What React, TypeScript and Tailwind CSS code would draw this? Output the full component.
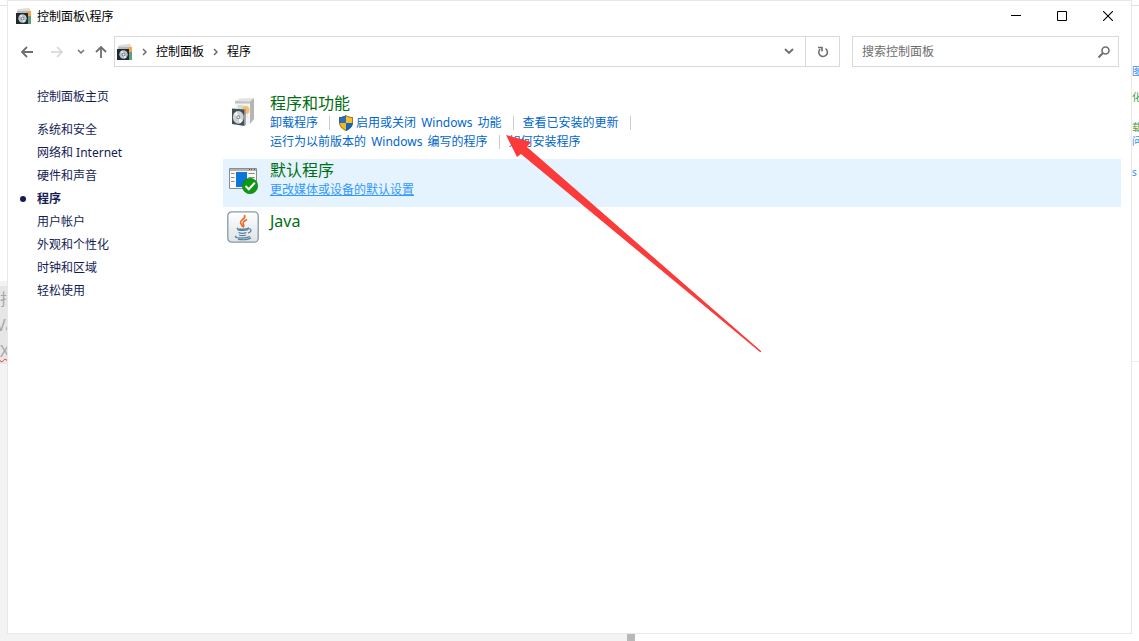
import type { ReactNode } from "react";

type NavItem = {
  label: string;
  active?: boolean;
};

const navItems: NavItem[] = [
  { label: "系统和安全" },
  { label: "网络和 Internet" },
  { label: "硬件和声音" },
  { label: "程序", active: true },
  { label: "用户帐户" },
  { label: "外观和个性化" },
  { label: "时钟和区域" },
  { label: "轻松使用" },
];

function PanelIcon() {
  return (
    <svg width="16" height="16" viewBox="0 0 16 16" className="shrink-0" aria-hidden="true">
      <path d="M2 1 13 0l2 3H1z" fill="#dcdcdc" />
      <path d="M1 3h14v13H1z" fill="#b9bdb9" />
      <path d="M10 3h5v6l-4-2z" fill="#f0a850" />
      <path d="M12 8h3v8h-3z" fill="#5f9f80" />
      <path d="M0 5h12v11H0z" fill="#23282c" />
      <circle cx="6.5" cy="10.5" r="4.2" fill="#b9c4ca" />
      <path d="m6.500 10.500-3-3 2-1zm0 0 3 3-2 1z" fill="#e8eef0" />
      <circle cx="6.5" cy="10.5" r="1.8" fill="#6d7479" />
      <circle cx="6.5" cy="10.5" r="1" fill="#fff" />
    </svg>
  );
}

function ProgramsIcon() {
  return (
    <svg width="32" height="32" viewBox="0 0 32 32" aria-hidden="true">
      <path d="m8 5 5-2.500 14-.5-4 3.500z" fill="#e3e3e3" />
      <path d="m8 5 15 .5V28l-5 1-10-2z" fill="#f4f4f4" />
      <path d="M23 5.500 27 2v21l-4 5z" fill="#b5b5b5" />
      <path d="m8 5 15 .5v2L8 7.500z" fill="#c2c2c2" />
      <path d="M10 9h11v13H10z" fill="#e8eeea" />
      <path d="M11 9h5l-2 5h-3z" fill="#c6e2d3" />
      <circle cx="18.5" cy="14" r="4" fill="#f9bd72" />
      <path d="m5 12.500 12.500 1V30L5 28z" fill="#454e54" />
      <path d="m17.500 13.500 1.200-1V29l-1.200 1z" fill="#8b9398" />
      <ellipse cx="11.3" cy="21.3" rx="5.4" ry="6.4" fill="#cbd4d9" />
      <path d="m11.300 21.300-4.500-3.300 3-2.800zm0 0 4.500 3.300-3 2.800z" fill="#fafafa" />
      <ellipse cx="11.3" cy="21.3" rx="1.8" ry="2" fill="#7c878e" />
      <circle cx="11.3" cy="21.3" r="1" fill="#fff" />
    </svg>
  );
}

function DefaultsIcon() {
  return (
    <svg width="32" height="32" viewBox="0 0 32 32" aria-hidden="true">
      <path d="M2.5 5.5h27v20h-27z" fill="#f8f8f8" stroke="#8c8c8c" />
      <path d="M3 6h26v2H3z" fill="#b3b3b3" />
      <path d="M22 6h1v1h-1zm2 0h1v1h-1zm3 0h1v1h-1z" fill="#555" />
      <path d="M4 10.500h3.500m-3.500 4h3.500m-3.500 4h3.500m14-8h6m-6 4h6m-6 4h6" stroke="#8a8a8a" />
      <path d="M9 9h11v15H9z" fill="#0f74d8" />
      <circle cx="23" cy="23" r="7.7" fill="#0b9a12" stroke="#087c0d" strokeWidth=".6" />
      <path d="m18.5 23 3.3 3.3 6-6.5" fill="none" stroke="#fff" strokeWidth="2" />
    </svg>
  );
}

function JavaIcon() {
  return (
    <svg width="32" height="32" viewBox="0 0 32 32" fill="none" aria-hidden="true">
      <defs>
        <linearGradient id="java-tile" x1="0" y1="0" x2="0" y2="1">
          <stop stopColor="#fff" />
          <stop offset="1" stopColor="#dde3e7" />
        </linearGradient>
      </defs>
      <rect x=".8" y=".8" width="30.4" height="30.4" rx="4" fill="url(#java-tile)" stroke="#8799a5" strokeWidth="1.3" />
      <path
        d="M17.500 4c2 4-5 5-4 8 .4 1.300 2 2 2 4M20 8.500c-3 1.500-5 3-3.500 5 .8 1.200.5 2-.5 3"
        stroke="#ec6a25"
        strokeWidth="1.6"
      />
      <path
        d="M11 17c-4 1.200 8 2 11-.2M10.500 18.500c1 1.200 8 1.200 10.500.2M11.500 21.500c2 .9 6 .8 8 0M12 24c2 .8 5 .8 7 0M9.500 25c-5 1.800 8 3.200 13.500.5M21 18c4-1 4 3 0 4M11 28.300c5 .7 11 .2 13-1.500"
        stroke="#56819f"
        strokeWidth="1.2"
      />
    </svg>
  );
}

function ShieldIcon() {
  return (
    <svg width="14" height="16" viewBox="0 0 14 16" className="mr-[3px] shrink-0" aria-hidden="true">
      <path d="M7 0C5 1.5 3 2 0 2v6h7z" fill="#2b6fb8" />
      <path d="M7 0c2 1.5 4 2 7 2v6H7z" fill="#fbbf24" />
      <path d="M0 8c.5 4 3.5 6.5 7 8V8z" fill="#f5b81f" />
      <path d="M14 8c-.5 4-3.5 6.5-7 8V8z" fill="#1467bb" />
      <path
        d="M7 .6c2 1.400 4 1.900 6.500 1.900V7c0 4-2.500 6.500-6.500 8.400C3 13.500.5 11 .5 7V2.500C3 2.500 5 2 7 .6z"
        fill="none"
        stroke="#4c5158"
        strokeOpacity=".65"
      />
    </svg>
  );
}

function TaskLink({ icon, children }: { icon?: ReactNode; children: ReactNode }) {
  return (
    <a href="#" className="flex items-center whitespace-nowrap text-[#0066cc] hover:underline">
      {icon}
      <span>{children}</span>
    </a>
  );
}

function Divider() {
  return <span className="mr-[9px] ml-[11px] h-[14px] w-px bg-[#cccccc]" />;
}

function Category({
  icon,
  title,
  highlighted,
  children,
}: {
  icon: ReactNode;
  title: string;
  highlighted?: boolean;
  children?: ReactNode;
}) {
  return (
    <section className={highlighted ? "flex gap-[11px] bg-[#e5f3ff] pl-1" : "flex gap-[11px] pl-1"}>
      <div className="shrink-0 pt-1">{icon}</div>
      <div className={children ? "pt-px pb-2" : "pt-1 pb-6"}>
        <h2 className="text-[16px] leading-5 text-[#006e12]">
          <a href="#">{title}</a>
        </h2>
        {children}
      </div>
    </section>
  );
}

function TitleBar() {
  return (
    <header className="flex h-[30px] items-center justify-between">
      <div className="flex items-center gap-[5px] pl-2 text-black">
        <PanelIcon />
        <h1>控制面板\程序</h1>
      </div>
      <div className="flex h-full text-black">
        <button type="button" aria-label="最小化" className="flex w-[46px] items-center justify-center">
          <svg width="10" height="10" viewBox="0 0 10 10" stroke="currentColor">
            <path d="M0 4.5h10" />
          </svg>
        </button>
        <button type="button" aria-label="最大化" className="flex w-[46px] items-center justify-center">
          <svg width="10" height="10" viewBox="0 0 10 10" fill="none" stroke="currentColor">
            <path d="M.5.5h9v9h-9z" />
          </svg>
        </button>
        <button type="button" aria-label="关闭" className="flex w-[46px] items-center justify-center">
          <svg width="10" height="10" viewBox="0 0 10 10" stroke="currentColor" strokeWidth="1.1">
            <path d="m0 0 10 10M10 0 0 10" />
          </svg>
        </button>
      </div>
    </header>
  );
}

function Crumb() {
  return (
    <svg width="5" height="8" viewBox="0 0 5 8" fill="none" stroke="#6b6b6b" strokeWidth="1.5" aria-hidden="true">
      <path d="m1 1 3 3-3 3" />
    </svg>
  );
}

function Toolbar() {
  return (
    <div className="mt-[5px] flex h-[31px] pr-3 pl-[13px]">
      <nav className="flex w-[93px] shrink-0 items-center text-[#6f6f6f]">
        <button type="button" aria-label="后退">
          <svg width="14" height="12" viewBox="0 0 14 12" fill="none" stroke="currentColor" strokeWidth="1.8">
            <path d="M12 6H1m5-5L1 6l5 5" />
          </svg>
        </button>
        <button type="button" aria-label="前进" className="ml-4 text-[#d4d4d4]">
          <svg width="14" height="12" viewBox="0 0 14 12" fill="none" stroke="currentColor" strokeWidth="1.5">
            <path d="M0 6h11M6 1l5 5-5 5" />
          </svg>
        </button>
        <button type="button" aria-label="最近浏览的位置" className="ml-3">
          <svg width="8" height="6" viewBox="0 0 8 6" fill="none" stroke="currentColor" strokeWidth="1.5">
            <path d="m1 1 3 3 3-3" />
          </svg>
        </button>
        <button type="button" aria-label="上移" className="ml-[10px]">
          <svg width="12" height="13" viewBox="0 0 12 13" fill="none" stroke="currentColor" strokeWidth="1.8">
            <path d="M6 13V2M1 7l5-5 5 5" />
          </svg>
        </button>
      </nav>

      <div className="flex flex-1 border border-[#d9d9d9]">
        <div className="flex flex-1 items-center gap-[9px] pl-[2px] text-black">
          <PanelIcon />
          <Crumb />
          <a href="#">控制面板</a>
          <Crumb />
          <a href="#">程序</a>
        </div>
        <button type="button" aria-label="以前的位置" className="flex w-8 items-center justify-center text-[#6f6f6f]">
          <svg width="10" height="7" viewBox="0 0 10 7" fill="none" stroke="currentColor" strokeWidth="1.9">
            <path d="m1 1 4 4 4-4" />
          </svg>
        </button>
        <button
          type="button"
          aria-label="刷新"
          className="flex w-[34px] items-center justify-center border-l border-[#d9d9d9] text-[#6f6f6f]"
        >
          <svg width="12" height="12" viewBox="0 0 12 12" fill="none" stroke="currentColor" strokeWidth="1.6">
            <path d="M8.5 2.6A4.3 4.3 0 1 1 3.2 3" />
            <path d="M1 1.5h4v4" />
          </svg>
        </button>
      </div>

      <form className="ml-3 flex w-[267px] items-center border border-[#d9d9d9] pr-2 pl-[9px]">
        <input
          type="search"
          aria-label="搜索控制面板"
          placeholder="搜索控制面板"
          className="min-w-0 flex-1 outline-none placeholder:text-[#6d6d6d]"
        />
        <svg width="12" height="12" viewBox="0 0 12 12" fill="none" stroke="#6f6f6f" aria-hidden="true">
          <circle cx="7.5" cy="4.5" r="3.5" strokeWidth="1.6" />
          <path d="m5 7-4.5 4.5" strokeWidth="2" />
        </svg>
      </form>
    </div>
  );
}

function Sidebar() {
  return (
    <aside className="w-[215px] shrink-0 pt-[18px] pl-3 text-[#151c55]">
      <a href="#" className="ml-[17px] block leading-[23px]">
        控制面板主页
      </a>
      <ul className="mt-[10px]">
        {navItems.map((item) => (
          <li key={item.label} className="flex h-[23px] items-center">
            <span className="w-[17px]">
              {item.active && <span className="block h-[6px] w-[6px] rounded-full bg-[#151c55]" />}
            </span>
            <a href="#" className={item.active ? "font-bold" : ""}>
              {item.label}
            </a>
          </li>
        ))}
      </ul>
    </aside>
  );
}

function Pointer() {
  return (
    <svg
      width="256"
      height="218"
      viewBox="0 0 256 218"
      className="pointer-events-none absolute top-[135px] left-[506px]"
      aria-hidden="true"
    >
      <path d="M0 0 25 7 21 12 255 216v1h-1L15 19 11 22z" fill="#fb3a3a" />
    </svg>
  );
}

export default function App() {
  return (
    <div className="relative flex min-h-screen flex-col bg-white font-['Noto_Sans','Noto_Sans_CJK_SC',sans-serif] text-[12px] leading-[19px]">
      <div className="flex flex-1">
        {/* document behind the window, left edge */}
        <div className="flex w-[7px] shrink-0 flex-col overflow-hidden text-[16px] text-[#a6a6a6]">
          <div className="h-[6px] border-b border-[#e0e0e0]" />
          <div className="h-[275px]" />
          <div className="h-[5px] bg-[#f3f3f3]" />
          <div className="h-[78px] bg-[#e6e6e6] leading-[26px] whitespace-nowrap">
            <p>指</p>
            <p className="-ml-1">Va</p>
            <p className="underline decoration-red-500 decoration-wavy decoration-1">X</p>
          </div>
          <div className="flex-1 bg-[#f3f3f3]" />
        </div>

        <main className="flex min-w-0 flex-1 flex-col border border-[#e8e8e8] bg-white">
          <TitleBar />
          <Toolbar />
          <div className="flex flex-1">
            <Sidebar />
            <div className="min-w-0 flex-1 pt-[25px] pr-[10px]">
              <Category icon={<ProgramsIcon />} title="程序和功能">
                <div className="flex items-center">
                  <TaskLink>卸载程序</TaskLink>
                  <Divider />
                  <TaskLink icon={<ShieldIcon />}>
                    启用或关闭 <span className="mx-[2px]">Windows</span> 功能
                  </TaskLink>
                  <Divider />
                  <TaskLink>查看已安装的更新</TaskLink>
                  <Divider />
                </div>
                <div className="flex items-center">
                  <TaskLink>
                    运行为以前版本的 <span className="mx-[2px]">Windows</span> 编写的程序
                  </TaskLink>
                  <Divider />
                  <TaskLink>如何安装程序</TaskLink>
                </div>
              </Category>
              <Category icon={<DefaultsIcon />} title="默认程序" highlighted>
                <a href="#" className="block text-[#3399ff] underline">
                  更改媒体或设备的默认设置
                </a>
              </Category>
              <Category icon={<JavaIcon />} title="Java" />
            </div>
          </div>
        </main>

        {/* page behind the window, right edge */}
        <div className="flex w-[7px] shrink-0 flex-col overflow-hidden text-[10px] leading-[14px] whitespace-nowrap text-[#3d8ce8]">
          <div className="h-[6px] border-b border-[#e0e0e0]" />
          <div className="mt-[58px]">图</div>
          <div className="mt-3 text-[#4c9a4c]">化</div>
          <div className="mt-4 text-[#4c9a4c]">载</div>
          <div>问</div>
          <div className="mt-[17px]">s 更</div>
          <div className="mt-[182px] border-b border-[#eeeeee]" />
        </div>
      </div>

      <footer className="flex h-[7px] bg-white">
        <div className="flex flex-1 justify-end bg-[#f3f3f3]">
          <div className="w-2 bg-[#b8b8b8]" />
        </div>
        <div className="w-[504px]" />
      </footer>
      <Pointer />
    </div>
  );
}
